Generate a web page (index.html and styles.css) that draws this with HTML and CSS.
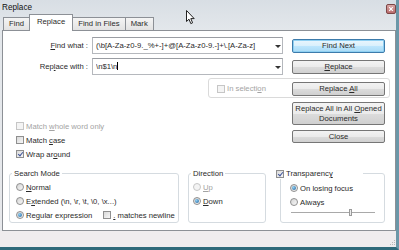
FILE: index.html
```html
<!DOCTYPE html>
<html lang="en">
<head>
    <meta charset="UTF-8">
    <meta name="viewport" content="width=device-width, initial-scale=1.0">
    <title>Replace</title>
    <link rel="stylesheet" href="styles.css">
</head>
<body>
    <div class="window">
        <div class="titlebar">
            <span class="title">Replace</span>
            <svg class="close" width="10" height="10" viewBox="0 0 10 10">
                <defs>
                    <linearGradient id="closeFill" x1="0" y1="0" x2="0" y2="1">
                        <stop offset="0" stop-color="#dcaaa8"/>
                        <stop offset="1" stop-color="#b8696a"/>
                    </linearGradient>
                </defs>
                <rect x="0.5" y="0.5" width="9" height="9" rx="1.5" fill="url(#closeFill)" stroke="#7d4747"/>
                <path d="M3.2 3.2 L6.8 6.8 M6.8 3.2 L3.2 6.8" stroke="#fff" stroke-width="1.2"/>
            </svg>
        </div>

        <div class="tabs">
            <div class="tab">Find</div>
            <div class="tab active">Replace</div>
            <div class="tab">Find in Files</div>
            <div class="tab">Mark</div>
        </div>

        <div class="panel">
            <div class="fields">
                <label class="field-label"><u>F</u>ind what :</label>
                <div class="combo">
                    <span class="combo-text">(\b[A-Za-z0-9._%+-]+@[A-Za-z0-9.-]+\.[A-Za-z]</span>
                    <span class="arrow"></span>
                </div>
                <button class="btn default">Find Next</button>

                <label class="field-label">Rep<u>l</u>ace with :</label>
                <div class="combo">
                    <span class="combo-text">\n$1\n<span class="caret"></span></span>
                    <span class="arrow"></span>
                </div>
                <button class="btn"><u>R</u>eplace</button>
            </div>

            <div class="selection">
                <label class="check disabled"><span class="box"></span><span>In selecti<u>o</u>n</span></label>
                <button class="btn">Replace <u>A</u>ll</button>
            </div>

            <div class="middle">
                <div class="options">
                    <label class="check disabled"><span class="box"></span><span>Match <u>w</u>hole word only</span></label>
                    <label class="check"><span class="box"></span><span>Match <u>c</u>ase</span></label>
                    <label class="check"><span class="box checked"></span><span>Wrap ar<u>o</u>und</span></label>
                </div>
                <div class="side-buttons">
                    <button class="btn tall">Replace All in All <u>O</u>pened<br>Documents</button>
                    <button class="btn short">Close</button>
                </div>
            </div>

            <div class="groups">
                <div class="group search-mode">
                    <span class="group-title">Search Mode</span>
                    <label class="radio"><span class="dot"></span><span><u>N</u>ormal</span></label>
                    <label class="radio"><span class="dot"></span><span>E<u>x</u>tended (\n, \r, \t, \0, \x...)</span></label>
                    <div class="radio-row">
                        <label class="radio"><span class="dot on"></span><span>Re<u>g</u>ular expression</span></label>
                        <label class="check newline"><span class="box"></span><span><u>.</u> matches newline</span></label>
                    </div>
                </div>

                <div class="group direction">
                    <span class="group-title">Direction</span>
                    <label class="radio disabled"><span class="dot"></span><span><u>U</u>p</span></label>
                    <label class="radio"><span class="dot on"></span><span><u>D</u>own</span></label>
                </div>

                <div class="group transparency">
                    <label class="group-title check"><span class="box checked"></span><span>Transparenc<u>y</u></span></label>
                    <label class="radio"><span class="dot on"></span><span>On losing focus</span></label>
                    <label class="radio"><span class="dot"></span><span>Always</span></label>
                    <div class="slider"><span class="thumb"></span></div>
                </div>
            </div>
        </div>

        <div class="statusbar">
            <svg class="grip" width="8" height="8" viewBox="0 0 8 8">
                <rect x="6" y="2" width="1" height="1" fill="#b9b9b9"/>
                <rect x="4" y="4" width="1" height="1" fill="#b9b9b9"/>
                <rect x="6" y="4" width="1" height="1" fill="#b9b9b9"/>
                <rect x="2" y="6" width="1" height="1" fill="#b9b9b9"/>
                <rect x="4" y="6" width="1" height="1" fill="#b9b9b9"/>
                <rect x="6" y="6" width="1" height="1" fill="#b9b9b9"/>
            </svg>
        </div>

        <!-- mouse pointer over the title bar -->
        <svg class="cursor" width="10" height="15" viewBox="0 0 10 15">
            <path d="M0.5 0.5 L0.5 11.5 L3 9.2 L4.8 13.6 L6.6 12.8 L4.8 8.6 L8.2 8.6 Z" fill="#fff" stroke="#222" stroke-width="1" stroke-linejoin="round"/>
        </svg>
    </div>
</body>
</html>
```

FILE: styles.css
```css
* {
    box-sizing: border-box;
}
body {
    margin: 0;
    width: 399px;
    height: 250px;
    overflow: hidden;
    font-family: "Liberation Sans", Arial, sans-serif;
    font-size: 7.7px;
    color: #2a2a2a;
    background: #dde2e7;
}
u {
    text-decoration-thickness: 1px;
    text-underline-offset: 1px;
}
.window {
    position: relative;
    height: 250px;
    display: flex;
    flex-direction: column;
    background: linear-gradient(#d8dee4, #e3e7eb 30px, #e8e9ec);
    border-right: 3px solid #6b97a8;
    border-bottom: 3px solid #2f6a7a;
}
.titlebar {
    height: 14px;
    display: flex;
    align-items: center;
    padding-left: 2px;
}
.title {
    font-size: 8.2px;
    color: #111;
}
.close {
    margin-left: auto;
    margin-right: 0;
    margin-top: 3px;
}
.tabs {
    height: 16px;
    display: flex;
    align-items: flex-end;
    padding-left: 3px;
}
.tab {
    height: 13px;
    line-height: 12px;
    padding: 0 5px;
    border: 1px solid #8c9096;
    border-bottom: none;
    border-right: none;
    background: linear-gradient(#f4f4f4, #e2e2e2);
}
.tab:last-child {
    border-right: 1px solid #8c9096;
}
.tab.active {
    height: 17px;
    line-height: 14px;
    margin-bottom: -1px;
    padding: 0 7px;
    background: #fff;
    border-right: 1px solid #8c9096;
    position: relative;
    z-index: 1;
}
.tab.active + .tab {
    border-left: none;
}
.panel {
    margin-left: 2px;
    height: 201px;
    border: 1px solid #8c9096;
    background: #fff;
    display: flex;
    flex-direction: column;
}
.fields {
    margin-top: 6px;
    display: grid;
    grid-template-columns: 85px 191px 98px;
    grid-template-rows: 17px 17px;
    column-gap: 4px;
    row-gap: 4px;
    align-items: center;
}
.field-label {
    text-align: right;
}
.combo {
    height: 17px;
    display: flex;
    align-items: center;
    border: 1px solid #b5b8bd;
    border-top-color: #9a9da3;
    padding-left: 3px;
    overflow: hidden;
    white-space: nowrap;
}
.combo-text {
    flex: 1;
    overflow: hidden;
}
.caret {
    display: inline-block;
    width: 1px;
    height: 8px;
    background: #000;
    vertical-align: -1px;
}
.arrow {
    width: 0;
    height: 0;
    margin: 1px 1px 0 3px;
    border-left: 3px solid transparent;
    border-right: 3px solid transparent;
    border-top: 3px solid #333;
}
.btn {
    width: 93px;
    height: 14px;
    padding: 0;
    font: inherit;
    color: #2a2a2a;
    border: 1px solid #767676;
    border-radius: 2px;
    background: linear-gradient(#f3f3f3, #ebebeb 50%, #dcdcdc 51%, #d0d0d0);
    justify-self: end;
}
.btn.default {
    border-color: #3d7bab;
    background: linear-gradient(#eaf6fd, #d9f0fc 50%, #bee6fd 51%, #a9dbf6);
    box-shadow: inset 0 0 0 1px #8fd0f2;
}
.btn.tall {
    height: 23px;
    line-height: 10px;
}
.btn.short {
    height: 13px;
}
.check, .radio {
    display: flex;
    align-items: center;
    gap: 2px;
    height: 14px;
    white-space: nowrap;
}
.box {
    position: relative;
    width: 8px;
    height: 8px;
    border: 1px solid #8f8f8f;
    background: linear-gradient(135deg, #d9d9d9, #f7f7f7);
    flex: none;
}
.box.checked::after {
    content: "";
    position: absolute;
    left: 2px;
    top: 0;
    width: 2px;
    height: 4px;
    border-right: 1.5px solid #3f549a;
    border-bottom: 1.5px solid #3f549a;
    transform: rotate(40deg);
}
.disabled {
    color: #a3a3a3;
}
.disabled .box, .disabled .dot {
    border-color: #c6c6c6;
    background: #f4f4f4;
}
.selection {
    margin: 3px 5px 0 205px;
    height: 20px;
    border: 1px solid #dadada;
    border-radius: 3px;
    display: flex;
    align-items: center;
    justify-content: space-between;
    padding: 1px 4px 0 8px;
}
.middle {
    display: flex;
    align-items: flex-start;
}
.options {
    margin-top: 21px;
    padding-left: 13px;
}
.side-buttons {
    margin-left: auto;
    margin-right: 10px;
    margin-top: 4px;
    display: flex;
    flex-direction: column;
    gap: 5px;
}
.groups {
    display: flex;
    align-items: flex-start;
    margin-top: 12px;
    padding-left: 6px;
}
.group {
    position: relative;
    height: 50px;
    border: 1px solid #d5dbe0;
    border-radius: 3px;
    padding-top: 6px;
}
.group-title {
    position: absolute;
    top: -6px;
    left: 2px;
    height: 11px;
    line-height: 11px;
    padding: 0 2px;
    background: #fff;
}
.search-mode {
    width: 170px;
    padding-left: 6px;
}
.direction {
    width: 78px;
    margin-left: 9px;
    padding-left: 4px;
}
.transparency {
    width: 105px;
    margin-left: 14px;
    padding-left: 9px;
    padding-top: 7px;
}
.transparency .group-title {
    left: -5px;
    width: 87px;
    height: 11px;
    padding: 0;
}
.radio-row {
    display: flex;
}
.newline {
    margin-left: 11px;
}
.dot {
    position: relative;
    width: 8px;
    height: 8px;
    border: 1px solid #8f8f8f;
    border-radius: 50%;
    background: linear-gradient(135deg, #d4d4d4, #f8f8f8);
    flex: none;
}
.dot.on::after {
    content: "";
    position: absolute;
    left: 1px;
    top: 1px;
    width: 4px;
    height: 4px;
    border-radius: 50%;
    background: radial-gradient(circle at 35% 35%, #8fd0f5, #1d5f99);
}
.slider {
    position: relative;
    margin-left: 1px;
    margin-top: -1px;
    width: 84px;
    height: 5px;
    border-bottom: 1px solid #a9a9a9;
}
.thumb {
    position: absolute;
    left: 58px;
    top: 1px;
    width: 3px;
    height: 7px;
    border: 1px solid #9a9a9a;
    background: #ececec;
}
.statusbar {
    height: 16px;
    background: #efecee;
    display: flex;
    justify-content: flex-end;
    align-items: flex-end;
}
.grip {
    margin: 0 0 1px 0;
}
.cursor {
    position: absolute;
    left: 186px;
    top: 10px;
}
```
